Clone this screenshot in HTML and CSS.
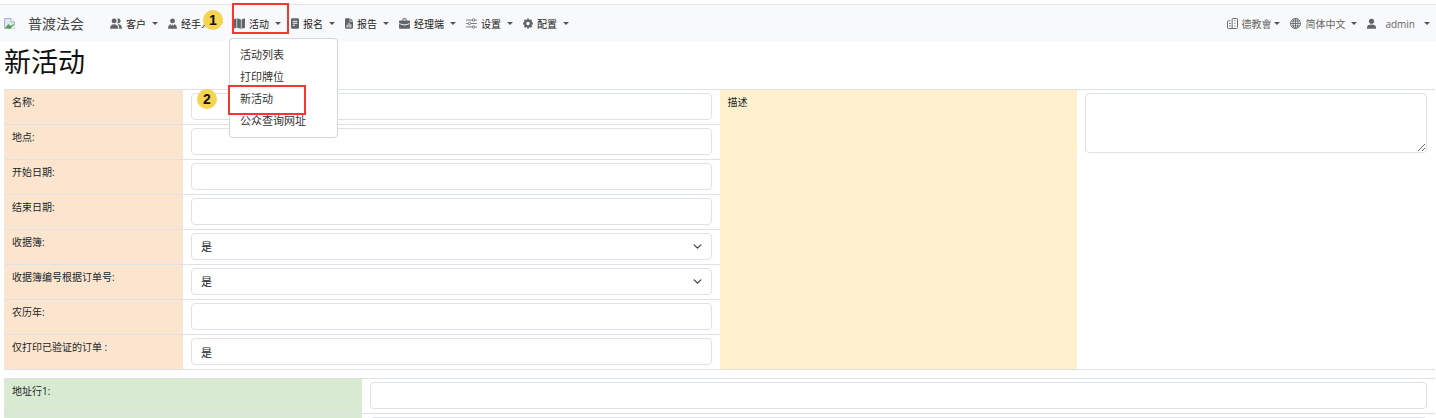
FILE: index.html
```html
<!DOCTYPE html>
<html lang="zh-CN">
<head>
    <meta charset="UTF-8">
    <meta name="viewport" content="width=device-width, initial-scale=1.0">
    <title>新活动</title>
    <link rel="stylesheet" href="styles.css">
</head>
<body>
    <nav class="navbar">
        <a class="brand" href="#">
            <svg class="brand-logo" viewBox="0 0 11 11">
                <path d="M.5.5h6.500l3.500 3.500v6.500H.5z" fill="#dbe7f5" stroke="#aab4c0"/>
                <path d="M7 .5V4h3.500" fill="#fff" stroke="#aab4c0"/>
                <path d="M1 10l3.500-4 2 2L10 6v2l-3 2.500z" fill="#55a046"/>
                <path d="M6.500 10.500l4-4v4z" fill="#fff"/>
            </svg>
            普渡法会
        </a>

        <ul class="menu">
            <li>
                <button class="nav-btn" type="button">
                    <svg class="icon icon-lg" viewBox="0 0 16 14"><circle cx="5.500" cy="3.500" r="3.300"/><path d="M0 14c0-4 2-6 5.500-6s5.500 2 5.500 6z"/><path d="M9.500.5a3.300 3.300 0 1 1 0 6 5 5 0 0 0 0-6zM11 8c3.500 0 5 2.300 5 6h-3.800c0-2.500-.5-4.500-2-5.800z"/></svg>
                    客户
                </button>
            </li>
            <li class="has-mark">
                <button class="nav-btn" type="button">
                    <svg class="icon icon-md" viewBox="0 0 14 16"><circle cx="7" cy="4" r="3.800"/><path d="M0 16c0-4 1.500-6.500 4.500-7L6 12l.5-2.500h1L8 12l1.500-3c3 .5 4.500 3 4.500 7z"/></svg>
                    经手人
                </button>
                <span class="step step-1">1</span>
            </li>
            <li class="has-mark">
                <button class="nav-btn" type="button" aria-expanded="true">
                    <svg class="icon icon-lg" viewBox="0 0 16 14"><path d="M0 1.500L4.600 0v12.500L0 14zM5.500 0l5 1.500V14l-5-1.500zM11.400 1.500L16 0v12.500L11.400 14z"/></svg>
                    活动
                </button>
                <span class="frame frame-nav"></span>
                <ul class="dropdown">
                    <li><a href="#">活动列表</a></li>
                    <li><a href="#">打印牌位</a></li>
                    <li class="has-mark">
                        <a href="#">新活动</a>
                        <span class="frame frame-item"></span>
                        <span class="step step-2">2</span>
                    </li>
                    <li><a href="#">公众查询网址</a></li>
                </ul>
            </li>
            <li>
                <button class="nav-btn" type="button">
                    <svg class="icon icon-sm" viewBox="0 0 12 16"><path fill-rule="evenodd" d="M2 0h8a2 2 0 0 1 2 2v12a2 2 0 0 1-2 2H2a2 2 0 0 1-2-2V2a2 2 0 0 1 2-2zm.5 4v1.200h7V4zm0 3v1.200h7V7zm0 3v1.200H6V10z"/></svg>
                    报名
                </button>
            </li>
            <li>
                <button class="nav-btn" type="button">
                    <svg class="icon icon-sm" viewBox="0 0 12 16"><path fill-rule="evenodd" d="M2 0h5v5h5v9a2 2 0 0 1-2 2H2a2 2 0 0 1-2-2V2a2 2 0 0 1 2-2zm.5 10v4H4v-4zM5.300 7v7h1.500V7zM8 9v5h1.500V9z"/><path d="M8 0l4 4H8z"/></svg>
                    报告
                </button>
            </li>
            <li>
                <button class="nav-btn" type="button">
                    <svg class="icon" viewBox="0 0 16 15"><path fill-rule="evenodd" d="M5 3V2a2 2 0 0 1 2-2h2a2 2 0 0 1 2 2v1h3.500A1.500 1.500 0 0 1 16 4.500V7l-8 2-8-2V4.500A1.500 1.500 0 0 1 1.500 3zm1.200 0h3.600V2a.8.8 0 0 0-.8-.8H7a.8.8 0 0 0-.8.8z"/><path d="M0 8.300l8 2 8-2v5.200a1.500 1.500 0 0 1-1.500 1.500h-13A1.500 1.500 0 0 1 0 13.500z"/></svg>
                    经理端
                </button>
            </li>
            <li>
                <button class="nav-btn" type="button">
                    <svg class="icon" viewBox="0 0 16 16"><g fill="none" stroke="currentColor" stroke-width="1.200"><path d="M0 3h9M13 3h3M0 8h3M7 8h9M0 13h9M13 13h3"/><circle cx="11" cy="3" r="1.800"/><circle cx="5" cy="8" r="1.800"/><circle cx="11" cy="13" r="1.800"/></g></svg>
                    设置
                </button>
            </li>
            <li>
                <button class="nav-btn" type="button">
                    <svg class="icon icon-gear" viewBox="0 0 16 16"><circle cx="8" cy="8" r="4.500" fill="none" stroke="currentColor" stroke-width="3.400"/><path d="M6.500 0h3l.6 3H5.900zM6.500 16h3l.6-3H5.900zM0 6.500v3l3 .6V5.900zM16 6.500v3l-3 .6V5.900zM1.300 3.400l2.100-2.100L6 3 3 6zM14.700 3.400l-2.100-2.100L10 3l3 3zM1.300 12.600l2.100 2.100L6 13l-3-3zM14.700 12.600l-2.100 2.100L10 13l3-3z"/></svg>
                    配置
                </button>
            </li>
        </ul>

        <ul class="menu menu-right">
            <li>
                <button class="nav-btn tight" type="button">
                    <svg class="icon" viewBox="0 0 16 16"><g fill="none" stroke="currentColor" stroke-width="1.400"><path d="M7.500 15.300V2q0-1.300 1.300-1.300H14q1.300 0 1.300 1.300v12q0 1.300-1.300 1.300H2q-1.300 0-1.300-1.300V5.500q0-1.300 1.300-1.300h3"/><path d="M11.500 3v1.500M11.500 7v1.500M11.500 11v1.500M3 8h2.500M3 11.500h2.500"/></g></svg>
                    德教會
                </button>
            </li>
            <li>
                <button class="nav-btn" type="button">
                    <svg class="icon" viewBox="0 0 16 16"><g fill="none" stroke="currentColor" stroke-width="1.300"><circle cx="8" cy="8" r="7.300"/><ellipse cx="8" cy="8" rx="3.500" ry="7.300"/><path d="M8 .7v14.600M.7 8h14.600M1.800 4.500h12.400M1.800 11.500h12.400"/></g></svg>
                    简体中文
                </button>
            </li>
            <li>
                <button class="nav-btn user" type="button">
                    <svg class="icon icon-md" viewBox="0 0 14 16"><circle cx="7" cy="4.500" r="4"/><path d="M0 16v-2c0-3 2.500-4.500 7-4.500s7 1.500 7 4.500v2z"/></svg>
                    admin
                </button>
            </li>
        </ul>
    </nav>

    <main>
        <h1>新活动</h1>

        <form>
            <section class="event">
                <div class="fields">
                    <div class="row">
                        <label for="name">名称:</label>
                        <div class="cell"><input class="control" type="text" id="name"></div>
                    </div>
                    <div class="row">
                        <label for="place">地点:</label>
                        <div class="cell"><input class="control" type="text" id="place"></div>
                    </div>
                    <div class="row">
                        <label for="start">开始日期:</label>
                        <div class="cell"><input class="control" type="text" id="start"></div>
                    </div>
                    <div class="row">
                        <label for="end">结束日期:</label>
                        <div class="cell"><input class="control" type="text" id="end"></div>
                    </div>
                    <div class="row">
                        <label for="receipt">收据簿:</label>
                        <div class="cell">
                            <select class="control" id="receipt">
                                <option>是</option>
                            </select>
                        </div>
                    </div>
                    <div class="row">
                        <label for="receipt-no">收据簿编号根据订单号:</label>
                        <div class="cell">
                            <select class="control" id="receipt-no">
                                <option>是</option>
                            </select>
                        </div>
                    </div>
                    <div class="row">
                        <label for="lunar">农历年:</label>
                        <div class="cell"><input class="control" type="text" id="lunar"></div>
                    </div>
                    <div class="row">
                        <label for="verified">仅打印已验证的订单 :</label>
                        <div class="cell"><input class="control" type="text" id="verified" value="是"></div>
                    </div>
                </div>
                <label class="desc-label" for="desc">描述</label>
                <div class="cell"><textarea class="control" id="desc"></textarea></div>
            </section>

            <section class="address">
                <div class="row">
                    <label for="addr1">地址行1:</label>
                    <div class="cell"><input class="control" type="text" id="addr1"></div>
                </div>
                <div class="row">
                    <label for="addr2"></label>
                    <div class="cell"><input class="control" type="text" id="addr2"></div>
                </div>
            </section>
        </form>
    </main>
</body>
</html>
```
FILE: styles.css
```css
:root {
    --border: #dee2e6;
    --text: #212529;
    --mark: #f93434;
}

* {
    box-sizing: border-box;
    margin: 0;
    padding: 0;
}

html {
    scrollbar-width: none;
}

body {
    font-family: "Open Sans", "Noto Sans CJK SC", sans-serif;
    font-size: 10px;
    line-height: 16px;
    color: var(--text);
    background: #fff;
    padding-top: 4px;
}

ul {
    list-style: none;
}

a {
    color: inherit;
    text-decoration: none;
}

/* 导航栏 */
.navbar {
    display: flex;
    align-items: center;
    height: 38px;
    padding: 0 6px 0 4px;
    background: #f8f9fa;
    border-top: 1px solid #e4e6e8;
}

.brand {
    display: flex;
    align-items: center;
    gap: 13px;
    width: 106px;
    font-size: 14px;
    color: #444;
}

.brand-logo {
    width: 11px;
    height: 11px;
}

.menu {
    display: flex;
    gap: 10px;
}

.menu-right {
    margin-left: auto;
}

.menu-right .nav-btn {
    color: #666;
}

.nav-btn {
    display: flex;
    align-items: center;
    gap: 4px;
    border: none;
    background: none;
    font: inherit;
    color: #222;
    white-space: nowrap;
    cursor: pointer;
}

/* 下拉箭头 */
.nav-btn::after {
    content: "";
    margin-left: 2px;
    border: 3px solid transparent;
    border-width: 3px 3px 0;
    border-top-color: #555;
}

.nav-btn.tight {
    gap: 3px;
}

.nav-btn.user {
    gap: 9px;
}

.nav-btn.tight::after,
.nav-btn.user::after {
    margin-left: 0;
}

.icon {
    width: 11px;
    height: 11px;
    fill: currentColor;
    color: #626568;
}

.icon-lg {
    width: 12px;
}

.icon-md {
    width: 9px;
}

.icon-sm {
    width: 8px;
}

.icon-gear {
    width: 10px;
}

.has-mark {
    position: relative;
}

.dropdown {
    position: absolute;
    z-index: 1;
    top: 22px;
    left: -4px;
    width: 109px;
    padding: 5px 0;
    background: #fff;
    border: 1px solid #d3d5d8;
    border-radius: 4px;
    font-size: 11px;
    line-height: 22px;
}

.dropdown a {
    display: block;
    padding: 0 10px;
    color: #333;
}

/* 步骤标注 */
.frame {
    position: absolute;
    z-index: 2;
    border: 2px solid var(--mark);
    pointer-events: none;
}

.frame-nav {
    top: -13px;
    left: -1px;
    width: 57px;
    height: 31px;
}

.frame-item {
    top: -3px;
    left: -2px;
    width: 78px;
    height: 30px;
}

.step {
    position: absolute;
    z-index: 2;
    width: 20px;
    height: 20px;
    border-radius: 50%;
    background: #f5d450;
    color: #111;
    font-family: "Liberation Sans", sans-serif;
    font-size: 14px;
    font-weight: bold;
    line-height: 20px;
    text-align: center;
}

.step-1 {
    top: -6px;
    left: 35px;
}

.step-2 {
    top: 1px;
    left: -33px;
}

/* 表单 */
main {
    padding: 0 1px 0 4px;
}

h1 {
    font-size: 27px;
    font-weight: normal;
    line-height: 40px;
    padding-bottom: 7px;
    color: #111;
}

.event {
    display: grid;
    grid-template-columns: 2fr 1fr 1fr;
    border-top: 1px solid var(--border);
    border-bottom: 1px solid var(--border);
    margin-bottom: 8px;
}

.row {
    display: grid;
    grid-template-columns: 1fr 3fr;
}

.row + .row {
    border-top: 1px solid var(--border);
}

label {
    padding: 4px 8px;
}

.fields label {
    background: #fbe5ce;
}

.cell {
    display: flex;
    padding: 3px 8px 4px;
}

.desc-label {
    background: #fff1cd;
}

.address {
    border-top: 1px solid var(--border);
}

.address label {
    background: #d9ead3;
}

.control {
    width: 100%;
    height: 27px;
    padding: 0 9px;
    border: 1px solid var(--border);
    border-radius: 4px;
    background: #fff;
    color: var(--text);
    font-family: inherit;
    font-size: 11px;
}

select.control {
    appearance: none;
    background: #fff url("data:image/svg+xml,%3Csvg xmlns='http://www.w3.org/2000/svg' viewBox='0 0 16 16'%3E%3Cpath fill='none' stroke='%23343a40' stroke-linecap='round' stroke-linejoin='round' stroke-width='2' d='m2 5 6 6 6-6'/%3E%3C/svg%3E") no-repeat right 9px center / 9px 9px;
}

textarea.control {
    height: 60px;
    padding: 4px 9px;
}
```
